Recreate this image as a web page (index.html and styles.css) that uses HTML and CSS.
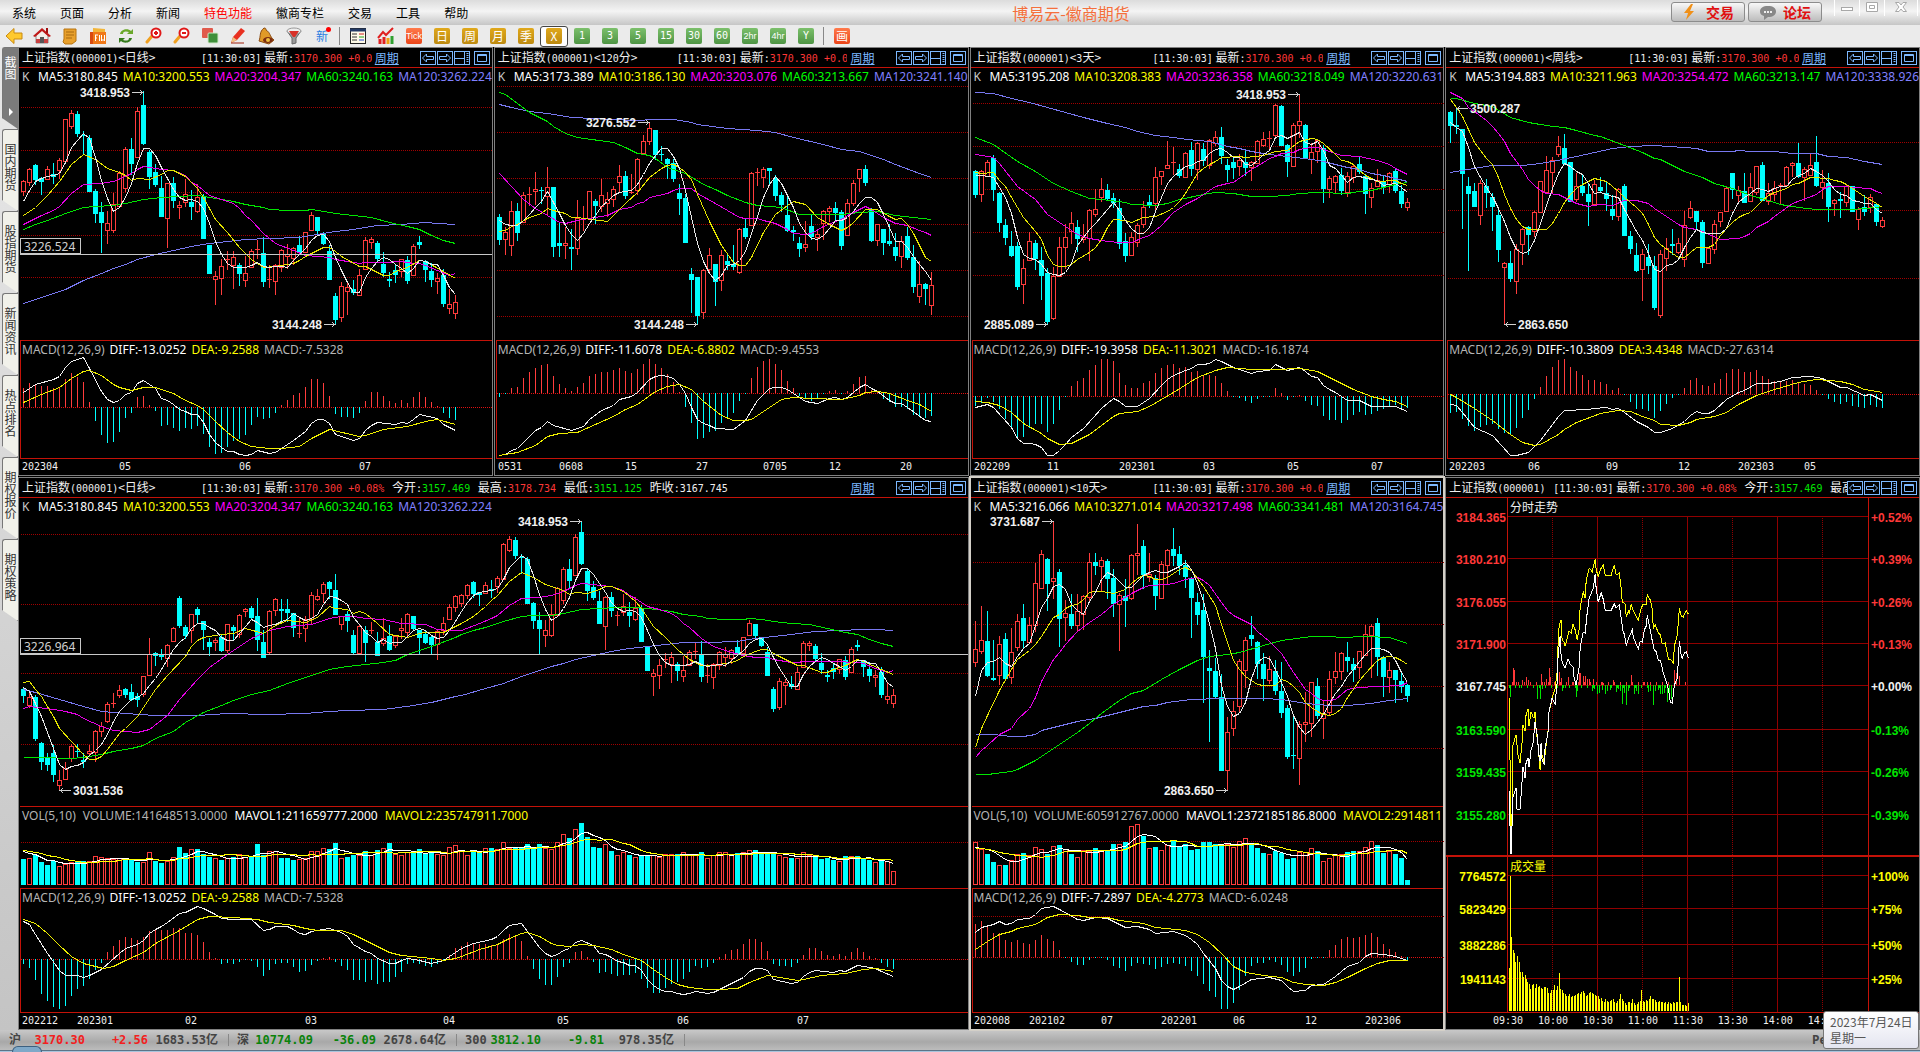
FILE: index.html
```html
<!DOCTYPE html>
<html lang="zh-CN">
<head>
<meta charset="utf-8">
<title>博易云-徽商期货</title>
<link rel="stylesheet" href="styles.css">
</head>
<body>
<svg class="defs" width="0" height="0" aria-hidden="true">
  <symbol id="i-prev" viewBox="0 0 16 14"><path d="M2.5 7 6.5 3v2.5h7v3h-7V11z" fill="none" stroke="#7cb8ff"/></symbol>
  <symbol id="i-next" viewBox="0 0 16 14"><path d="M13.5 7 9.500 3v2.5h-7v3h7V11z" fill="none" stroke="#7cb8ff"/></symbol>
  <symbol id="i-side" viewBox="0 0 16 14"><path d="M0 7.500h10M10.500 1v12" fill="none" stroke="#7cb8ff"/><path d="M13.500 2v10" stroke="#7cb8ff" stroke-width="2" stroke-dasharray="1 1"/></symbol>
  <symbol id="i-max" viewBox="0 0 16 14"><path d="M3.500 3.500h9v7h-9zM3 4.500h10" fill="none" stroke="#7cb8ff"/></symbol>
</svg>

<header class="menubar">
  <nav class="menu">
    <a href="#">系统</a><a href="#">页面</a><a href="#">分析</a><a href="#">新闻</a><a href="#" class="hot">特色功能</a><a href="#">徽商专栏</a><a href="#">交易</a><a href="#">工具</a><a href="#">帮助</a>
  </nav>
  <h1 class="app-title">博易云-徽商期货</h1>
  <div class="actions">
    <button class="pill"><svg width="14" height="16" viewBox="0 0 14 16"><path d="M9 0 2 9h4l-2 7 8-9H8l3-7z" fill="#f09018"/></svg>交易</button>
    <button class="pill"><svg width="18" height="16" viewBox="0 0 18 16"><path d="M9 2c5 0 8 2 8 5.500S14 13 9 13l-4 3v-4C2 11 1 9.500 1 7.500 1 4 4 2 9 2z" fill="#888"/><path d="M5 7h2v2H5zM8 7h2v2H8zM11 7h2v2h-2z" fill="#eee"/></svg>论坛</button>
    <div class="win">
      <button aria-label="最小化"><svg width="14" height="14"><rect x="1.500" y="7.500" width="11" height="3" fill="#fff" stroke="#a8a8a8"/></svg></button>
      <button aria-label="还原"><svg width="14" height="14"><path d="M1.500 2.500h11v9h-11zM4.500 5.500h5v3h-5z" fill="#fff" stroke="#a8a8a8"/></svg></button>
      <button aria-label="关闭"><svg width="14" height="14"><path d="M1.500 2.500h3.500l2 2.500 2-2.500h3.500L9 7l3.500 4.500H9L7 9l-2 2.500H1.500L5 7z" fill="#fff" stroke="#a8a8a8"/></svg></button>
    </div>
  </div>
</header>

<div class="toolbar" role="toolbar">
  <button aria-label="后退"><svg width="18" height="18"><path d="M1 9 9 1.500V6h8v6H9v4.500z" fill="#ffc92e" stroke="#c98a10"/></svg></button>
  <button aria-label="首页"><svg width="18" height="18"><path d="M3 8v8h12V8L9 3z" fill="#f3efe9" stroke="#888"/><path d="M0 9 9 1l9 8-2 1-7-6-7 6z" fill="#c01818"/><path d="M13 1h2v5h-2z" fill="#a01010"/><path d="M3 12h4v4H3zM11 12h4v4h-4z" fill="#c84040"/><path d="M7 10h4v6H7z" fill="#555"/></svg></button>
  <button aria-label="公告"><svg width="18" height="18"><path d="M3 2h12v12l-4 3H4l-2-2 1-3z" fill="#e8a02c" stroke="#b87510"/><path d="M5 5h8M5 8h8M5 11h6" stroke="#a86a10"/></svg></button>
  <button aria-label="期货"><svg width="18" height="18"><path d="M4 1l12 1v4H4z" fill="#f2b53a"/><path d="M1 5h16v12H1z" fill="#f07818"/><path d="M1 5h3v12H1z" fill="#d84a10"/><path d="M6 8h3M6.500 8v6M6 11h2M10.500 8v6M12.500 8v6M15.500 8v6M13 13h3" stroke="#fff" fill="none"/></svg></button>
  <button aria-label="刷新"><svg width="18" height="18"><path d="M3 7c1-5 8-6 11-3l2-2v5h-6l2-2C9 4 6 4 6 7z" fill="#6aa82a"/><path d="M15 11c-1 5-8 6-11 3l-2 2v-5h6l-2 2c3 1 6 1 6-2z" fill="#347a1c"/></svg></button>
  <button aria-label="放大"><svg width="18" height="18"><path d="M7 9 2 15" stroke="#f0a020" stroke-width="3" stroke-linecap="round"/><circle cx="11" cy="6" r="4.500" fill="#fff" stroke="#e01818" stroke-width="2"/><path d="M9 6h4M11 4v4" stroke="#e01818" stroke-width="2"/></svg></button>
  <button aria-label="缩小"><svg width="18" height="18"><path d="M7 9 2 15" stroke="#f0a020" stroke-width="3" stroke-linecap="round"/><circle cx="11" cy="6" r="4.500" fill="#fff" stroke="#e01818" stroke-width="2"/><path d="M9 6h4" stroke="#e01818" stroke-width="2"/></svg></button>
  <button aria-label="叠加"><svg width="18" height="18"><rect x="1" y="1" width="11" height="10" rx="1" fill="#e05a4c"/><rect x="7" y="6" width="10" height="10" rx="1" fill="#3f8f3a" stroke="#cfe8c8"/></svg></button>
  <button aria-label="画线"><svg width="18" height="18"><path d="M2 16 4 10 12 1l4 3-8 9z" fill="#e83020"/><path d="M2 16l2-6 4 3z" fill="#f0c080"/><path d="M2 16h13" stroke="#a0200c"/></svg></button>
  <button aria-label="预警"><svg width="18" height="18"><path d="M7 1c2 0 2 1 2 2 5 3 3 6 8 10l-5 4-10-3c2-5 0-9 5-13z" fill="#e09a28" stroke="#8a4a10"/><ellipse cx="11" cy="13" rx="5" ry="3" fill="#7a2c10"/><circle cx="11" cy="13" r="2" fill="#f0c040"/></svg></button>
  <button aria-label="筛选"><svg width="18" height="18"><path d="M2 4l5 7v6l4-1v-5l5-7z" fill="#9a9a9a" stroke="#666"/><ellipse cx="9" cy="4" rx="7" ry="3" fill="#eee" stroke="#999"/><path d="M4 4h10l-4 6H8z" fill="#d83028"/></svg></button>
  <button class="new">新<span class="dot"></span></button>
  <i class="sep"></i>
  <button aria-label="报价"><svg width="18" height="18"><rect x="1.500" y="1.500" width="15" height="15" fill="#fffbe8" stroke="#222"/><path d="M1 3h16" stroke="#223a66" stroke-width="3"/><path d="M3 7h5M3 10h5M3 13h5" stroke="#333"/><path d="M10 7h5" stroke="#d02020"/><path d="M10 10h5" stroke="#20a020"/><path d="M10 13h5" stroke="#2040d0"/></svg></button>
  <button aria-label="走势"><svg width="18" height="18"><path d="M3 12v5M7 10v7" stroke="#e02020" stroke-width="3"/><path d="M11 11v6" stroke="#f0a010" stroke-width="3"/><path d="M15 9v8" stroke="#30a030" stroke-width="3"/><path d="M1 11l5-6 3 3 7-7" stroke="#e02020" stroke-width="2" fill="none"/></svg></button>
  <button><b class="tile red small">Tick</b></button>
  <button><b class="tile gold">日</b></button>
  <button><b class="tile gold">周</b></button>
  <button><b class="tile gold">月</b></button>
  <button><b class="tile gold">季</b></button>
  <button class="on"><b class="tile gold">X</b></button>
  <button><b class="tile green">1</b></button>
  <button><b class="tile green">3</b></button>
  <button><b class="tile green">5</b></button>
  <button><b class="tile green">15</b></button>
  <button><b class="tile green">30</b></button>
  <button><b class="tile green">60</b></button>
  <button><b class="tile green small">2hr</b></button>
  <button><b class="tile green small">4hr</b></button>
  <button><b class="tile green">Y</b></button>
  <i class="sep"></i>
  <button><b class="tile red">画</b></button>
</div>

<main class="desk">
  <nav class="tabs">
    <a href="#" class="tab current"><span>截图</span><i class="tri"></i></a>
    <a href="#" class="tab"><span>国内期货</span></a>
    <a href="#" class="tab"><span>股指期货</span></a>
    <a href="#" class="tab"><span>新闻资讯</span></a>
    <a href="#" class="tab"><span>热点排名</span></a>
    <a href="#" class="tab"><span>期权报价</span></a>
    <a href="#" class="tab"><span>期权策略</span></a>
  </nav>

  <div class="panels">
    <section class="panel">
      <header class="bar"><h2>上证指数<tt>(000001)</tt>&lt;日线&gt;</h2><p class="quote"><tt>[11:30:03]</tt> 最新<tt>:</tt><tt class="up">3170.300 +0.08%</tt></p><a href="#" class="cycle">周期</a><div class="nav" data-nav></div></header>
      <div class="pane main"><p class="legend"><span class="k">K</span><span class="w">MA5:3180.845</span><span class="y">MA10:3200.553</span><span class="m">MA20:3204.347</span><span class="g">MA60:3240.163</span><span class="b">MA120:3262.224</span></p><svg class="plot" data-chart="day" data-part="price"></svg></div>
      <div class="pane macd"><p class="legend"><span class="n">MACD(12,26,9)</span><span class="w">DIFF:-13.0252</span><span class="y">DEA:-9.2588</span><span class="n">MACD:-7.5328</span></p><svg class="plot" data-chart="day" data-part="macd"></svg></div>
      <svg class="axis" data-chart="day" data-part="axis"></svg>
    </section>
    <section class="panel">
      <header class="bar"><h2>上证指数<tt>(000001)</tt>&lt;<tt>120</tt>分&gt;</h2><p class="quote"><tt>[11:30:03]</tt> 最新<tt>:</tt><tt class="up">3170.300 +0.08%</tt></p><a href="#" class="cycle">周期</a><div class="nav" data-nav></div></header>
      <div class="pane main"><p class="legend"><span class="k">K</span><span class="w">MA5:3173.389</span><span class="y">MA10:3186.130</span><span class="m">MA20:3203.076</span><span class="g">MA60:3213.667</span><span class="b">MA120:3241.140</span></p><svg class="plot" data-chart="m120" data-part="price"></svg></div>
      <div class="pane macd"><p class="legend"><span class="n">MACD(12,26,9)</span><span class="w">DIFF:-11.6078</span><span class="y">DEA:-6.8802</span><span class="n">MACD:-9.4553</span></p><svg class="plot" data-chart="m120" data-part="macd"></svg></div>
      <svg class="axis" data-chart="m120" data-part="axis"></svg>
    </section>
    <section class="panel">
      <header class="bar"><h2>上证指数<tt>(000001)</tt>&lt;<tt>3</tt>天&gt;</h2><p class="quote"><tt>[11:30:03]</tt> 最新<tt>:</tt><tt class="up">3170.300 +0.08%</tt></p><a href="#" class="cycle">周期</a><div class="nav" data-nav></div></header>
      <div class="pane main"><p class="legend"><span class="k">K</span><span class="w">MA5:3195.208</span><span class="y">MA10:3208.383</span><span class="m">MA20:3236.358</span><span class="g">MA60:3218.049</span><span class="b">MA120:3220.631</span></p><svg class="plot" data-chart="d3" data-part="price"></svg></div>
      <div class="pane macd"><p class="legend"><span class="n">MACD(12,26,9)</span><span class="w">DIFF:-19.3958</span><span class="y">DEA:-11.3021</span><span class="n">MACD:-16.1874</span></p><svg class="plot" data-chart="d3" data-part="macd"></svg></div>
      <svg class="axis" data-chart="d3" data-part="axis"></svg>
    </section>
    <section class="panel">
      <header class="bar"><h2>上证指数<tt>(000001)</tt>&lt;周线&gt;</h2><p class="quote"><tt>[11:30:03]</tt> 最新<tt>:</tt><tt class="up">3170.300 +0.08%</tt></p><a href="#" class="cycle">周期</a><div class="nav" data-nav></div></header>
      <div class="pane main"><p class="legend"><span class="k">K</span><span class="w">MA5:3194.883</span><span class="y">MA10:3211.963</span><span class="m">MA20:3254.472</span><span class="g">MA60:3213.147</span><span class="b">MA120:3338.926</span></p><svg class="plot" data-chart="week" data-part="price"></svg></div>
      <div class="pane macd"><p class="legend"><span class="n">MACD(12,26,9)</span><span class="w">DIFF:-10.3809</span><span class="y">DEA:3.4348</span><span class="n">MACD:-27.6314</span></p><svg class="plot" data-chart="week" data-part="macd"></svg></div>
      <svg class="axis" data-chart="week" data-part="axis"></svg>
    </section>
    <section class="panel wide">
      <header class="bar"><h2>上证指数<tt>(000001)</tt>&lt;日线&gt;</h2><p class="quote"><tt>[11:30:03]</tt> 最新<tt>:</tt><tt class="up">3170.300 +0.08%</tt> 今开<tt>:</tt><tt class="down">3157.469</tt> 最高<tt>:</tt><tt class="up">3178.734</tt> 最低<tt>:</tt><tt class="down">3151.125</tt> 昨收<tt>:3167.745</tt></p><a href="#" class="cycle">周期</a><div class="nav" data-nav></div></header>
      <div class="pane main"><p class="legend"><span class="k">K</span><span class="w">MA5:3180.845</span><span class="y">MA10:3200.553</span><span class="m">MA20:3204.347</span><span class="g">MA60:3240.163</span><span class="b">MA120:3262.224</span></p><svg class="plot" data-chart="dayLong" data-part="price"></svg></div>
      <div class="pane vol"><p class="legend"><span class="n">VOL(5,10)</span><span class="n">VOLUME:141648513.0000</span><span class="w">MAVOL1:211659777.2000</span><span class="y">MAVOL2:235747911.7000</span></p><svg class="plot" data-chart="dayLong" data-part="vol"></svg></div>
      <div class="pane macd tall"><p class="legend"><span class="n">MACD(12,26,9)</span><span class="w">DIFF:-13.0252</span><span class="y">DEA:-9.2588</span><span class="n">MACD:-7.5328</span></p><svg class="plot" data-chart="dayLong" data-part="macd"></svg></div>
      <svg class="axis" data-chart="dayLong" data-part="axis"></svg>
    </section>
    <section class="panel active">
      <header class="bar"><h2>上证指数<tt>(000001)</tt>&lt;<tt>10</tt>天&gt;</h2><p class="quote"><tt>[11:30:03]</tt> 最新<tt>:</tt><tt class="up">3170.300 +0.08%</tt></p><a href="#" class="cycle">周期</a><div class="nav" data-nav></div></header>
      <div class="pane main"><p class="legend"><span class="k">K</span><span class="w">MA5:3216.066</span><span class="y">MA10:3271.014</span><span class="m">MA20:3217.498</span><span class="g">MA60:3341.481</span><span class="b">MA120:3164.745</span></p><svg class="plot" data-chart="d10" data-part="price"></svg></div>
      <div class="pane vol"><p class="legend"><span class="n">VOL(5,10)</span><span class="n">VOLUME:605912767.0000</span><span class="w">MAVOL1:2372185186.8000</span><span class="y">MAVOL2:2914811</span></p><svg class="plot" data-chart="d10" data-part="vol"></svg></div>
      <div class="pane macd tall"><p class="legend"><span class="n">MACD(12,26,9)</span><span class="w">DIFF:-7.2897</span><span class="y">DEA:-4.2773</span><span class="n">MACD:-6.0248</span></p><svg class="plot" data-chart="d10" data-part="macd"></svg></div>
      <svg class="axis" data-chart="d10" data-part="axis"></svg>
    </section>
    <section class="panel">
      <header class="bar compact"><h2>上证指数<tt>(000001)</tt></h2><p class="quote"><tt>[11:30:03]</tt> 最新<tt>:</tt><tt class="up">3170.300 +0.08%</tt> 今开<tt>:</tt><tt class="down">3157.469</tt> 最高<tt>:</tt><tt class="up">3178.734</tt></p><div class="nav" data-nav></div></header>
      <div class="tick">
        <svg class="tick-left" id="tick-left"></svg>
        <svg class="tick-plot" id="tick-plot"></svg>
        <svg class="tick-right" id="tick-right"></svg>
      </div>
    </section>
  </div>
</main>

<footer class="status">
  <span class="name">沪</span><span class="price up">3170.30</span><span class="diff up">+2.56</span><span class="sum">1683.53亿</span><i></i>
  <span class="name">深</span><span class="price down">10774.09</span><span class="diff down">-36.09</span><span class="sum">2678.64亿</span><i></i>
  <span class="name">300</span><span class="price down">3812.10</span><span class="diff down">-9.81</span><span class="sum">978.35亿</span><i></i>
  <span class="pe">Pe</span>
</footer>
<div class="taskbar"><span class="orb"></span></div>
<div class="tip">2023年7月24日<br>星期一</div>
<script src="chart.js"></script>
</body>
</html>
```

FILE: styles.css
```css
* { box-sizing: border-box; }
html { background: #000; }
body {
  margin: 0;
  min-height: 100vh;
  display: flex;
  flex-direction: column;
  position: relative;
  font: 12px/16px "Noto Sans CJK SC", sans-serif;
  color: #000;
  overflow-x: hidden;
}
h1, h2, p { margin: 0; font-size: 12px; font-weight: 400; }
a { color: inherit; text-decoration: none; }
button { margin: 0; padding: 0; border: 0; background: none; font: inherit; color: inherit; }
svg { display: block; }
tt { font: 10px/16px "DejaVu Sans Mono", monospace; }
.defs { position: absolute; }

/* menu bar */
.menubar {
  height: 25px;
  display: grid;
  grid-template-columns: 1fr auto 1fr;
  align-items: center;
  background: linear-gradient(#dcdcdc, #f4f4f4 45%, #c6c6c6);
}
.menu { display: flex; gap: 24px; padding-left: 12px; }
.menu .hot { color: #f00; }
.app-title { font-size: 16px; line-height: 24px; color: #f5703c; padding-left: 222px; }
.actions { display: flex; justify-content: flex-end; gap: 3px; height: 25px; padding-top: 2px; }
.pill {
  width: 74px;
  height: 20px;
  display: flex;
  align-items: center;
  justify-content: center;
  gap: 10px;
  border: 1px solid #8c8c8c;
  border-radius: 3px;
  background: linear-gradient(#f8f8f8, #bcbcbc);
  color: #e01010;
  font-size: 14px;
  font-weight: 700;
}
.pill + .pill { gap: 6px; }
.win { display: flex; margin: -2px 2px 0 9px; height: 16px; }
.win button { width: 25px; border-left: 1px solid #fff; display: flex; justify-content: center; }
.win button:last-child { width: 34px; border-right: 1px solid #fff; justify-content: center; }

/* toolbar */
.toolbar { height: 22px; display: flex; align-items: center; background: #ebebeb; }
.toolbar button { width: 28px; height: 21px; display: flex; align-items: center; justify-content: center; position: relative; }
.toolbar .on { border: 1px solid #444; border-radius: 3px; background: #fff; }
.sep { width: 1px; height: 18px; margin: 0 4px 0 3px; background: #888; }
.new { color: #2a7de1; font-size: 12px; }
.dot { position: absolute; right: 5px; top: 1px; width: 5px; height: 5px; border-radius: 50%; background: #f00; }
.tile {
  width: 16px;
  height: 16px;
  display: flex;
  justify-content: center;
  border-radius: 2px;
  color: #fff;
  font: 12px/16px "Noto Sans CJK SC", sans-serif;
  white-space: nowrap;
}
.gold { background: linear-gradient(#e0a81c, #bd8a10); }
.green { background: linear-gradient(#7cc06c, #4e9444); font: 10px/16px "DejaVu Sans Mono", monospace; }
.red { background: linear-gradient(#ff7a4c, #ea4418); }
.tile.small { font: 9px/16px "Liberation Sans", sans-serif; }

/* side tabs and panel grid */
.desk { flex: 1; display: flex; }
.tabs { width: 18px; padding-left: 2px; background: linear-gradient(#e8e8e8, #c4c4c4); }
.tab {
  height: 82px;
  display: flex;
  flex-direction: column;
  align-items: center;
  justify-content: center;
  padding-bottom: 6px;
  background: #f1f1ea;
  border: 1px solid #777;
  border-right: 0;
  border-radius: 3px 0 0 0;
  clip-path: polygon(0 0, 100% 0, 100% 100%, 0 71px);
  color: #333;
}
.tab span { width: 12px; line-height: 12px; word-break: break-all; }
.tab.current { background: #7b7b7b; color: #fff; justify-content: space-between; padding: 8px 0 12px; }
.tri { border: 4px solid transparent; border-left-color: #fff; border-right: 0; }
.panels {
  flex: 1;
  min-width: 0;
  display: grid;
  grid-template-columns: repeat(4, minmax(0, 1fr));
  grid-template-rows: minmax(429px, 429fr) minmax(553px, 553fr);
  gap: 1px;
  background: #000;
}
.panel {
  min-width: 0;
  display: flex;
  flex-direction: column;
  border: 1px solid #808080;
  background: #000;
  color: #f0f0f0;
}
.panel.wide { grid-column: span 2; }
.panel.active { border-color: #d4d0c8; outline: 1px solid #d4d0c8; z-index: 1; }
.bar {
  height: 20px;
  display: flex;
  align-items: center;
  padding: 0 2px 0 3px;
  border-bottom: 1px solid #c41208;
  white-space: pre;
}
.bar h2 { flex: 0 0 179px; }
.bar.compact h2 { flex-basis: 104px; }
.quote { flex: 1; min-width: 0; overflow: hidden; }
.quote .up, .quote .down { margin-right: 5px; }
.quote .up { color: #ff3838; }
.quote .down { color: #00e600; }
.cycle { margin: 0 21px 0 3px; color: #7cb8ff; text-decoration: underline; }
.nav { display: flex; gap: 1px; }
.nav button { width: 16px; height: 14px; border: 1px solid #7cb8ff; overflow: hidden; }
.nav button svg { margin: -1px; }
.nav button:last-child { margin-left: 3px; }

/* chart panes */
.pane { display: flex; flex-direction: column; border-bottom: 1px solid #c41208; margin-left: 1px; }
.pane.main { flex: 1; }
.pane.vol { flex: 0 0 82px; }
.pane.macd { flex: 0 0 118px; border-left: 1px solid #c41208; }
.pane.macd.tall { flex-basis: 124px; }
.pane.macd .legend { padding-left: 1px; }
.pane.macd .plot { margin-left: -2px; width: calc(100% + 2px); }
.legend { display: flex; gap: 5px; height: 18px; padding-left: 2px; overflow: hidden; white-space: nowrap; font: 12px/18px "Noto Sans", sans-serif; }
.pane.vol .legend { gap: 7px; }
.legend .k { width: 11px; color: #c8c8c8; }
.w { color: #fff; }
.y { color: #ff0; }
.m { color: #f0f; }
.g { color: #0f0; }
.b { color: #8080ff; }
.n { color: #b4b4b4; }
.plot { flex: 1 1 0; height: 0; width: calc(100% + 1px); margin-left: -1px; min-height: 0; overflow: visible; shape-rendering: crispEdges; }
.plot text { font: 700 12px "Liberation Sans", sans-serif; fill: #f0f0f0; }
.plot text.cross { font: 12px "Noto Sans", sans-serif; fill: #d0d0d0; }
.axis { height: 16px; width: 100%; }
.axis text, .tick-plot text { font: 10px "DejaVu Sans Mono", monospace; fill: #f0f0f0; }
.tick { flex: 1; display: flex; }
.tick > svg { height: 100%; overflow: visible; shape-rendering: crispEdges; }
.tick-left { flex: 0 0 62px; width: 62px; }
.tick-plot { flex: 1; width: 100%; min-width: 0; }
.tick-right { flex: 0 0 51px; width: 51px; }
.tick-left text, .tick-right text { font: 700 12px "Liberation Sans", sans-serif; }
.tick-plot text.cap { font: 12px "Noto Sans CJK SC", sans-serif; }

/* status bar */
.status {
  height: 20px;
  display: flex;
  align-items: center;
  padding-left: 9px;
  background: linear-gradient(#c8c8c8, #a8a8a8 60%, #bcbcbc);
  font: 700 12px/16px "DejaVu Sans Mono", "Noto Sans CJK SC", monospace;
  color: #444;
  white-space: nowrap;
}
.status .up { color: #f22020; }
.status .down { color: #0a820a; }
.status .name { width: 18px; }
.status .price { width: 58px; text-align: right; }
.status .diff { width: 63px; text-align: right; }
.status .sum { width: 70px; text-align: right; }
.status i { width: 1px; height: 12px; margin: 0 8px 0 10px; background: #888; }
.pe { margin-left: auto; width: 108px; font-family: "Noto Sans", sans-serif; }
.taskbar { height: 2px; background: #a9c4dc; border-top: 1px solid #5c7488; position: relative; }
.orb { position: absolute; left: 12px; bottom: 0; width: 30px; height: 6px; border-radius: 15px 15px 0 0; background: #7fa8c8; border: 1px solid #3c6080; border-bottom: 0; }
.tip {
  position: absolute;
  right: 1px;
  bottom: 3px;
  z-index: 2;
  width: 96px;
  height: 38px;
  padding: 2px 6px;
  border: 1px solid #767676;
  border-radius: 3px;
  background: linear-gradient(#fff, #e4e5f0);
  color: #575757;
  white-space: nowrap;
}
```

FILE: chart.js
```js
// Candles: colour letter, then high, body top, body bottom, low, measured down from the panel top.
const DAY = `r420 424 452 467;r385 388 425 438;c372 376 420 434;c412 414 426 464;r378 388 416 418;c368 402 411 433;r354 360 390 416;r236 238 364 366;r210 220 258 266;c213 222 281 292;c274 284 288 345;c286 294 455 456;c448 454 521 548;c486 516 549 638;r514 550 571 612;r458 492 569 578;r394 398 499 500;r322 328 443 456;c294 327 371 404;r202 213 352 354;c154 195 311 314;c330 337 410 446;c372 396 435 440;c408 444 530 530;r428 430 535 624;c412 430 482 504;r484 496 502 536;r418 463 487 500;c450 486 500 540;r432 470 512 518;c462 470 597 597;c615 615 701 701;r694 709 718 794;r657 679 714 766;r634 657 660 690;r633 650 675 746;c669 675 701 738;r648 699 721 741;r626 633 680 684;r600 628 631 656;c592 640 725 741;r676 717 720 744;r672 675 723 766;r628 631 680 697;r612 641 649 686;r621 625 653 675;c588 616 638 644;r576 577 635 636;r515 526 569 570;c531 531 573 586;c576 578 611 616;c616 633 719 719;c759 768 839 853;r727 738 832 845;r729 740 754 824;c720 748 759 766;r688 706 766 769;r591 601 688 690;r591 598 606 627;c603 609 656 664;c637 672 699 712;c697 717 722 741;c676 690 704 729;r656 658 693 712;c648 660 722 733;r612 619 706 707;c588 606 616 627;c660 663 689 725;c670 692 719 741;r700 715 724 762;c687 705 791 801;r746 793 805 822;r766 787 820 838`;
const DAY_MA = [
  '70,482 88,450 106,424 124,413 142,409 160,406 178,400 196,365 214,322 232,300 250,279 268,293 286,350 304,420 322,475 340,514 358,502 376,470 394,430 412,370 430,325 448,325 466,345 484,380 502,415 520,448 538,472 556,481 574,477 592,482 610,503 628,550 646,602 664,642 682,668 700,680 718,680 736,680 754,675 772,666 790,677 808,682 826,679 844,677 862,680 880,660 898,642 916,624 934,600 952,586 970,583 988,602 1006,652 1024,690 1042,725 1060,757 1078,757 1096,712 1114,684 1132,664 1150,652 1168,656 1186,671 1204,685 1222,699 1240,684 1258,661 1276,662 1294,671 1312,671 1330,706 1348,741 1366,761',
  '70,524 106,500 124,484 142,464 160,443 178,424 214,371 250,341 286,358 322,384 358,397 376,405 394,421 412,414 448,417 484,401 502,391 520,391 556,408 592,444 610,470 646,536 682,576 718,620 754,656 790,680 826,679 880,670 898,661 916,647 952,630 970,622 988,622 1006,634 1024,647 1078,679 1096,679 1150,706 1168,706 1186,692 1222,681 1258,659 1276,664 1330,694 1366,713',
  '70,551 124,526 160,510 178,497 214,460 250,433 304,430 340,422 376,408 394,400 412,388 430,379 466,383 484,388 520,391 556,406 574,426 592,436 610,450 628,464 664,476 700,490 718,503 736,524 754,540 790,580 826,608 880,631 916,644 952,649 988,651 1006,657 1060,667 1078,669 1096,665 1150,665 1204,664 1240,669 1258,668 1276,674 1312,691 1348,704 1366,700',
  '70,568 106,553 142,540 196,520 250,500 286,499 340,496 376,490 430,476 484,472 538,469 592,466 628,471 700,482 736,493 790,502 808,507 862,511 916,511 934,508 970,512 1006,520 1060,526 1114,530 1168,546 1222,559 1258,568 1294,584 1330,601 1366,610',
  '70,788 142,765 196,746 250,721 304,700 340,685 376,673 412,657 466,643 520,629 574,618 628,609 682,603 736,597 808,595 898,592 952,582 1006,574 1060,568 1132,556 1204,552 1276,547 1312,549 1366,553'
];
const DAY_BARS = '1045 1030 1033 1038 1038 1044 1043 1018 999 1010 1026 1086 1142 1185 1209 1206 1175 1134 1118 1071 1068 1095 1114 1158 1154 1163 1172 1165 1167 1158 1182 1221 1242 1239 1221 1203 1196 1185 1154 1131 1137 1134 1118 1095 1080 1065 1060 1041 1017 1017 1028 1068 1122 1131 1130 1134 1118 1083 1056 1056 1068 1083 1089 1080 1089 1071 1056 1071 1086 1098 1118 1134 1140';
const DAY_DIFF = '70,1055 106,1033 160,1018 178,1008 196,980 214,962 250,952 268,985 304,1053 322,1077 340,1087 358,1079 376,1063 394,1056 412,1028 430,1021 466,1044 484,1075 502,1080 520,1093 538,1108 556,1112 574,1123 592,1123 610,1145 628,1183 646,1206 664,1222 682,1232 700,1234 718,1243 736,1246 754,1242 772,1231 808,1240 826,1235 880,1199 916,1174 934,1150 952,1138 970,1136 988,1148 1006,1183 1060,1200 1078,1195 1096,1171 1114,1154 1132,1147 1186,1153 1204,1146 1222,1150 1240,1136 1258,1123 1312,1135 1330,1151 1366,1171';
const DAY_DEA = '70,1086 124,1061 178,1040 214,1014 250,994 268,991 304,1006 340,1033 358,1042 394,1049 430,1040 466,1042 520,1060 556,1080 592,1096 610,1107 646,1142 682,1176 718,1203 754,1217 808,1225 844,1225 898,1218 934,1193 988,1168 1078,1187 1096,1184 1150,1166 1222,1158 1276,1143 1312,1138 1366,1151';

// Continue a long series with the recent one, shifted and rescaled to the long chart's range.
const shiftPoints = (s, from, to, k) => s.split(' ').map(p => { const [x, y] = p.split(',').map(Number); return `${x + 1314},${Math.round(to + (y - from) * k)}`; }).join(' ');
const shiftMa = i => ' ' + shiftPoints(DAY_MA[i], 154, 138, 0.737);
const shiftCandles = DAY.split(';').map(c => c[0] + c.slice(1).split(' ').map(v => Math.round(138 + (v - 154) * 0.737)).join(' ')).join(';');

const CHARTS = {
  day: {
    x0: 70, unit: 3, tops: { price: 138, macd: 957 }, origin: 57,
    candles: DAY, ma: DAY_MA, grid: [202, 331, 457, 586, 712], cross: [643, '3226.524'],
    marks: [['3418.953', 430, 155, 1], ['3144.248', 1006, 853, 1]],
    zero: 1102, bars: DAY_BARS, diff: DAY_DIFF, dea: DAY_DEA,
    axis: [[65, '202304'], [357, '05'], [716, '06'], [1076, '07']]
  },
  m120: {
    x0: 28, unit: 3, tops: { price: 138, macd: 957 }, origin: 15,
    candles: `c522 532 600 614;r561 577 596 645;r484 514 616 648;c488 514 578 602;r457 466 547 549;r441 461 464 498;r396 448 454 494;c441 450 453 492;r381 442 469 524;c441 441 620 651;c549 609 617 651;r562 610 616 657;c568 621 627 690;r480 535 623 644;r498 537 540 573;r453 454 534 536;c477 483 497 552;r417 466 498 516;r455 476 490 530;r438 446 476 501;r376 409 425 456;c392 408 467 478;r402 455 460 462;r354 356 451 464;r285 302 340 343;r248 263 302 315;c270 270 345 360;c318 341 345 364;c354 357 372 418;c358 370 417 427;c432 459 477 525;c462 475 609 609;c684 702 720 818;c711 711 828 853;r687 690 815 836;r624 646 688 700;c672 672 726 797;r630 646 721 752;c640 662 675 690;c614 672 682 690;r564 566 695 702;c537 564 591 597;r396 400 556 558;r384 397 400 438;r382 388 410 444;c384 384 392 434;c406 414 467 483;c456 465 495 515;c466 524 573 576;c558 570 575 603;c591 610 627 651;r542 613 622 636;c526 558 591 600;r570 583 590 633;r510 512 548 600;r498 503 512 546;c486 504 520 546;c510 516 618 630;r477 490 586 588;r420 430 490 498;r387 388 413 456;c375 388 429 438;c504 508 603 606;r552 553 599 618;c566 568 609 645;c552 602 611 618;c579 620 648 663;r588 604 647 684;c560 588 654 660;c615 651 741 759;r663 733 767 789;c729 732 747 795;r696 736 794 825`,
    ma: [
      '28,541 46,552 64,556 82,556 100,540 118,522 136,500 154,482 172,454 190,486 208,520 226,556 244,582 262,600 280,580 298,550 316,524 334,498 352,484 370,464 388,456 406,452 424,450 442,432 460,402 478,370 496,345 514,323 532,325 550,348 568,385 586,450 604,530 622,610 640,662 658,700 676,720 694,706 712,676 730,672 748,660 766,632 784,580 802,528 820,470 838,432 856,408 874,430 892,465 910,502 928,548 946,575 964,595 982,598 1000,585 1018,565 1036,540 1054,540 1072,532 1090,512 1108,490 1126,472 1144,470 1162,485 1180,522 1198,562 1216,604 1234,603 1252,622 1270,648 1288,671 1306,693 1324,720',
      '28,572 46,571 64,557 82,553 100,540 118,530 154,518 172,504 190,511 226,520 244,532 262,530 280,534 352,543 370,524 406,490 442,455 478,411 514,385 532,375 550,373 568,380 586,396 604,416 622,462 658,544 694,615 730,667 748,676 766,676 784,650 820,575 856,522 892,495 910,484 946,493 982,531 1018,553 1054,570 1072,562 1090,545 1126,508 1162,506 1198,527 1216,538 1234,535 1252,551 1270,580 1306,650 1324,662',
      '28,398 64,438 100,477 136,503 172,526 208,546 226,548 262,541 352,524 388,508 424,502 442,490 460,485 478,472 532,460 550,449 568,443 604,445 622,459 676,490 712,510 748,532 766,535 802,533 820,540 856,550 892,568 910,578 946,583 964,579 1000,557 1036,544 1054,538 1072,526 1108,506 1126,499 1144,506 1180,530 1216,549 1252,556 1288,571 1306,577 1324,586',
      '28,155 46,162 82,190 118,217 172,244 190,259 226,279 262,290 370,307 406,320 442,338 478,346 496,354 532,380 586,400 640,432 676,446 712,465 766,486 802,494 874,502 928,523 1000,523 1054,521 1108,516 1162,514 1216,525 1270,530 1324,536',
      '28,193 64,202 118,212 172,220 244,232 310,234 430,240 500,238 550,238 604,245 622,253 712,264 802,270 856,276 910,292 1000,313 1054,326 1108,334 1180,356 1216,373 1288,399 1324,410'],
    grid: [139, 277, 415, 553, 691, 829],
    marks: [['3276.552', 478, 247, 1], ['3144.248', 622, 853, 1]],
    zero: 1060,
    bars: '1071 1062 1044 1041 1014 995 983 975 971 1008 1032 1044 1053 1041 1028 1008 1002 996 995 990 983 993 998 987 971 957 971 983 1002 1026 1056 1101 1149 1197 1194 1176 1174 1149 1134 1119 1083 1062 1014 980 963 957 971 990 1022 1044 1068 1078 1083 1077 1062 1053 1049 1062 1053 1032 1011 1008 1050 1053 1077 1086 1101 1100 1107 1125 1130 1134 1128',
    diff: '28,1246 46,1242 64,1231 82,1225 136,1171 154,1161 172,1144 190,1156 244,1170 280,1158 298,1136 334,1110 370,1094 388,1078 424,1069 442,1056 478,1018 496,1009 514,1006 532,1008 550,1015 568,1033 586,1060 604,1100 622,1136 640,1150 658,1154 676,1165 730,1167 766,1140 802,1081 838,1045 856,1042 874,1042 892,1048 910,1060 946,1083 982,1090 1018,1073 1036,1070 1054,1078 1072,1070 1108,1041 1126,1032 1144,1044 1162,1053 1198,1080 1216,1089 1234,1090 1252,1101 1306,1141 1324,1144',
    dea: '28,1244 82,1237 136,1214 172,1189 208,1179 262,1175 316,1153 370,1129 406,1107 442,1093 496,1054 532,1038 568,1033 604,1048 640,1083 694,1126 730,1139 766,1141 784,1136 838,1100 874,1077 910,1070 964,1075 1054,1077 1108,1066 1126,1056 1162,1053 1198,1060 1252,1080 1288,1093 1324,1112',
    axis: [[23, '0531'], [206, '0608'], [405, '15'], [619, '27'], [818, '0705'], [1017, '12'], [1231, '20']]
  },
  d3: {
    x0: 28, unit: 3, tops: { price: 138, macd: 957 }, origin: 15,
    candles: `c390 394 466 474;r391 392 461 485;r360 366 408 412;c346 353 449 482;c455 459 548 575;c537 556 594 614;c574 618 647 651;c606 618 740 750;r658 685 733 791;r577 602 661 664;c600 609 656 690;c621 660 707 780;c684 699 846 853;r681 709 835 840;r591 622 709 711;r552 592 622 688;r516 550 574 612;c540 561 596 636;r552 590 598 609;r508 511 595 662;r446 506 523 530;r414 448 472 486;c432 450 477 480;c460 474 490 503;c477 504 611 627;c580 603 648 665;r576 592 644 645;r548 556 607 622;r484 502 553 564;c465 486 497 503;r381 412 490 520;r392 394 408 434;r303 376 385 387;r321 365 368 404;c372 387 408 414;r336 338 412 414;c306 330 386 408;r306 310 388 420;c310 327 363 378;r298 301 374 388;r273 290 308 318;c261 291 349 372;c357 375 389 427;c348 366 384 416;r342 361 379 408;c333 366 384 408;r363 366 382 423;r300 302 370 371;r276 298 314 322;r273 294 297 330;r192 195 284 292;c195 198 318 318;c312 315 365 411;r249 254 377 381;r164 244 254 294;c252 255 355 356;r310 337 358 402;r298 300 334 370;c316 325 447 489;r408 415 448 474;r405 408 427 462;c384 405 453 466;r396 408 455 470;r375 378 410 430;c348 372 396 402;c402 408 461 521;r430 445 470 503;r387 420 437 438;c408 422 443 462;r396 400 432 459;c385 394 452 460;c435 453 491 503;r474 487 502 512`,
    ma: [
      '28,404 46,406 82,411 100,440 118,470 136,520 154,590 172,643 190,653 208,658 226,672 244,697 262,702 280,706 298,695 316,668 334,615 352,592 370,568 388,548 406,528 424,508 442,487 460,510 478,540 496,565 514,578 532,580 550,560 568,512 586,470 604,430 622,408 640,392 658,378 676,374 694,362 712,360 730,340 748,326 766,323 784,335 802,350 820,352 838,372 856,376 874,360 892,342 910,330 928,292 946,285 964,295 982,286 1000,275 1018,305 1036,311 1054,302 1072,330 1090,375 1108,384 1126,405 1144,427 1162,412 1180,409 1216,418 1234,421 1252,434 1288,430 1306,440 1324,455',
      '28,397 46,400 82,396 100,420 118,437 136,470 172,532 208,572 226,597 244,645 262,672 280,679 298,679 316,671 334,656 370,636 388,622 406,598 424,562 442,538 478,540 496,546 532,532 568,527 604,513 622,500 640,482 658,458 676,430 694,398 712,385 730,373 748,363 766,352 820,348 838,352 892,345 928,332 964,329 1000,302 1036,295 1054,297 1072,308 1108,343 1126,360 1144,363 1162,372 1180,390 1198,405 1234,422 1288,421 1306,430 1324,436',
      '28,343 64,348 82,352 100,370 154,437 208,477 244,522 280,545 334,583 370,594 424,604 460,606 496,607 532,590 550,586 586,556 622,517 658,492 694,473 748,438 784,430 802,425 856,387 892,366 910,355 928,347 946,338 982,336 1000,328 1036,321 1054,322 1090,333 1126,345 1180,347 1234,359 1270,373 1288,385 1324,401',
      '28,290 82,313 154,363 208,394 262,428 316,453 370,475 406,477 478,486 496,493 568,494 604,489 640,476 712,463 748,457 802,460 856,468 910,469 964,466 1000,458 1054,457 1144,458 1180,454 1216,450 1252,440 1288,433 1324,425',
      '28,155 82,160 136,175 190,187 244,202 298,215 352,232 388,241 424,248 478,262 514,274 568,286 622,290 640,295 694,300 730,304 784,319 820,325 856,334 910,341 964,349 1036,357 1072,363 1144,380 1180,386 1216,398 1252,406 1288,415 1324,422'],
    grid: [190, 319, 448, 577, 706],
    marks: [['3418.953', 1000, 163, 1], ['2885.089', 244, 853, 1]],
    zero: 1069,
    bars: '1099 1089 1074 1086 1108 1137 1164 1194 1191 1164 1152 1152 1176 1152 1110 1071 1038 1023 1014 990 975 957 957 963 999 1035 1044 1044 1030 1023 999 983 975 971 983 980 996 993 1008 1005 1008 1029 1053 1067 1074 1083 1089 1077 1071 1069 1044 1059 1080 1071 1065 1083 1095 1098 1128 1140 1140 1149 1140 1126 1116 1125 1122 1113 1108 1098 1095 1104 1104',
    diff: '28,1100 64,1092 82,1100 136,1160 154,1195 172,1210 190,1208 208,1213 226,1221 244,1246 262,1246 280,1230 298,1213 316,1190 352,1165 406,1103 442,1075 460,1084 478,1099 514,1099 532,1086 550,1075 586,1036 604,1017 622,1006 658,989 676,985 694,973 712,973 730,968 748,958 766,964 802,982 856,1000 874,994 910,989 928,972 946,980 964,991 1000,982 1018,994 1036,1008 1054,1010 1072,1034 1090,1048 1108,1056 1144,1079 1180,1079 1198,1090 1216,1097 1288,1097 1324,1114',
    dea: '28,1084 64,1085 100,1094 136,1116 172,1148 226,1180 244,1195 280,1211 316,1210 370,1183 406,1156 442,1129 460,1120 514,1112 550,1098 586,1077 622,1055 694,1012 748,990 784,982 856,988 928,986 1000,985 1054,994 1126,1029 1162,1047 1216,1069 1252,1078 1288,1083 1324,1097',
    axis: [[23, '202209'], [243, '11'], [458, '202301'], [710, '03'], [962, '05'], [1214, '07']]
  },
  week: {
    x0: 31, unit: 3, tops: { price: 138, macd: 957 }, origin: 18,
    candles: `c213 216 258 309;c205 254 262 282;c267 268 402 567;c411 438 461 693;c429 453 500 501;r420 428 526 555;c417 438 458 503;c460 471 501 573;c500 525 630 666;r667 668 680 853;c632 670 717 726;r613 628 724 762;r564 566 613 675;c558 562 585 645;r513 517 572 591;r423 424 515 516;r348 391 455 458;r352 359 395 458;r288 319 343 350;c282 324 372 375;c366 366 486 486;r399 438 476 486;c403 438 459 467;c432 462 486 558;r420 432 493 497;c411 441 452 455;c427 459 477 513;c464 508 527 540;r444 447 529 543;c432 438 587 588;c572 588 627 642;c609 645 693 696;r627 643 688 782;c613 650 678 702;c648 678 804 810;r630 643 824 833;r594 625 653 692;c567 612 618 644;r594 610 637 642;r514 556 658 681;r484 505 530 537;c513 514 546 570;c540 546 669 684;r622 624 668 669;r540 552 626 642;r516 517 542 561;r442 445 514 516;c399 399 450 477;r438 449 466 485;c399 453 489 489;r400 442 482 484;r378 379 455 466;c366 375 483 484;r430 459 482 494;r423 444 462 482;r429 436 438 492;r378 382 434 436;r366 370 374 412;c309 370 411 414;r382 386 410 483;r342 374 404 408;c288 366 438 441;r390 427 440 477;c399 429 501 546;r477 481 490 528;c456 478 482 534;r435 438 485 500;c438 438 516 516;r500 507 536 570;c465 501 516 528;r462 472 500 520;c488 492 546 558;r531 541 557 564`,
    ma: [
      '31,247 49,261 67,273 85,320 103,378 121,412 139,442 157,469 175,505 193,542 211,592 229,626 247,640 265,632 283,600 301,548 319,495 337,443 355,400 373,370 391,379 409,392 427,402 445,430 463,460 481,456 499,463 517,468 535,471 553,508 571,540 589,572 607,600 625,638 643,686 661,692 679,676 697,672 715,657 733,620 751,590 769,567 787,575 805,580 841,580 859,563 877,520 895,485 913,472 931,460 949,443 967,446 985,452 1003,443 1021,439 1039,439 1057,418 1075,404 1093,398 1111,385 1129,393 1147,406 1165,424 1183,448 1201,463 1219,464 1237,481 1255,482 1273,490 1291,490 1309,508 1327,518',
      '31,178 49,202 67,228 85,268 103,306 139,354 157,372 175,412 193,462 211,505 229,538 247,558 265,568 319,567 337,550 355,518 373,486 391,462 409,443 427,433 445,422 463,415 499,424 517,438 535,452 553,470 571,486 589,500 607,520 625,552 643,592 661,612 697,640 715,652 733,650 751,636 769,622 805,622 823,612 841,585 859,563 877,545 895,530 913,522 931,516 949,498 967,480 985,464 1003,456 1039,443 1057,432 1075,428 1111,412 1165,413 1183,420 1201,423 1219,432 1237,445 1273,468 1309,488 1327,500',
      '31,155 67,175 85,200 103,213 139,240 157,258 175,278 193,302 211,340 247,388 265,418 283,435 301,449 319,459 355,463 373,470 409,490 445,497 481,492 517,496 553,480 589,480 625,490 643,503 715,553 733,562 769,567 787,574 841,597 895,593 913,587 931,578 949,562 985,544 1003,527 1057,490 1129,461 1147,446 1165,438 1219,437 1237,441 1291,445 1309,454 1327,458',
      '31,173 49,173 103,190 157,198 211,232 265,247 337,259 373,260 409,270 463,286 481,289 553,314 607,335 643,354 661,358 733,394 787,412 823,430 877,444 931,465 985,481 1021,493 1075,501 1129,508 1237,508 1273,503 1309,500 1327,499',
      '31,397 85,387 157,376 247,376 301,369 337,364 409,347 463,335 517,325 571,318 643,316 733,322 769,324 805,332 877,333 895,331 931,334 1003,334 1057,338 1129,340 1165,347 1219,352 1273,364 1327,371'],
    grid: [307, 511, 715],
    marks: [['3500.287', 52, 205, -1], ['2863.650', 196, 853, -1]],
    zero: 1063,
    bars: '1118 1115 1137 1158 1173 1161 1154 1152 1167 1178 1185 1164 1134 1110 1077 1041 1008 981 960 957 981 993 1006 1020 1020 1026 1032 1050 1044 1065 1086 1107 1108 1113 1134 1113 1092 1074 1062 1044 1020 1014 1035 1038 1030 1017 999 987 987 996 996 990 1008 1017 1024 1026 1024 1020 1030 1032 1035 1050 1065 1077 1086 1092 1086 1098 1101 1104 1095 1101 1104',
    diff: '31,1093 49,1095 67,1115 103,1161 157,1186 211,1246 229,1246 265,1235 301,1201 355,1129 373,1111 445,1108 463,1103 499,1102 517,1107 535,1103 553,1115 589,1144 625,1160 643,1177 661,1175 697,1163 733,1142 751,1124 769,1114 787,1120 805,1120 823,1111 859,1078 895,1055 913,1050 949,1028 985,1030 1021,1024 1057,1012 1111,1007 1147,1015 1201,1042 1219,1042 1273,1066 1291,1063 1327,1080',
    dea: '31,1063 49,1070 103,1105 157,1140 211,1182 247,1206 283,1214 301,1212 355,1182 373,1166 409,1145 481,1120 535,1111 571,1114 607,1127 643,1141 661,1151 715,1154 751,1147 769,1138 823,1129 859,1115 895,1091 949,1066 1003,1046 1075,1027 1129,1018 1201,1024 1237,1032 1273,1046 1309,1054 1327,1057',
    axis: [[27, '202203'], [264, '06'], [498, '09'], [715, '12'], [893, '202303'], [1091, '05']]
  },
  dayLong: {
    x0: 70, unit: 2.694, tops: { price: 124, vol: 956, macd: 1177 }, origin: 57,
    candles: `c588 590 609 628;r596 611 632 640;c606 612 724 729;c734 736 787 808;c762 776 796 811;c742 762 821 840;r807 836 850 862;r788 802 833 834;r738 744 777 786;c738 756 759 776;c762 780 786 803;r742 756 763 768;r700 704 759 786;r680 690 704 720;r625 631 675 683;r602 628 631 640;r580 594 607 614;c588 591 605 613;c577 598 621 622;c602 609 620 638;r555 556 604 612;r454 497 551 553;c490 493 502 528;c482 497 504 512;r470 472 507 530;r424 427 460 462;c340 346 420 425;c418 423 446 455;r388 389 432 465;c370 375 390 416;c406 408 430 485;c454 463 476 500;r452 459 464 487;c445 451 489 490;r415 416 484 494;c418 423 433 460;r389 392 443 452;r372 374 380 397;c367 373 399 404;c346 393 458 489;c430 464 507 507;r378 379 491 498;r345 348 378 394;c348 374 379 407;c348 374 384 410;c384 386 426 449;r400 439 443 452;r394 402 427 463;r330 338 402 416;r321 340 347 352;r302 308 332 358;c298 303 320 348;c280 324 391 391;r393 394 414 431;c380 389 407 436;c432 445 493 496;r418 421 494 497;c420 432 465 516;r410 430 435 442;c437 463 501 502;r400 453 465 473;c418 447 485 489;r445 447 472 480;r398 427 430 456;r386 387 436 448;c393 394 429 433;c430 431 454 496;c431 441 465 470;c445 449 472 497;r432 435 470 512;r396 413 430 445;r360 368 402 405;r336 339 368 382;` + shiftCandles,
    ma: [
      '70,584 88,596 106,628 124,664 142,706 160,750 178,792 196,805 214,798 232,794 250,786 268,768 286,754 304,738 322,710 340,675 358,650 376,632 394,616 412,611 430,600 448,580 466,561 484,535 502,508 520,483 538,464 556,450 574,425 592,413 610,413 628,424 646,430 664,450 682,457 700,457 718,440 736,420 754,402 772,410 790,424 808,418 826,415 844,408 862,402 880,384 898,396 916,404 934,400 952,389 970,360 988,340 1006,341 1024,351 1042,362 1060,395 1078,415 1096,436 1114,446 1132,464 1150,455 1168,467 1186,464 1204,463 1222,446 1240,430 1258,426 1276,430 1294,445 1312,452 1330,449 1348,430 1366,406' + shiftMa(0),
      '70,570 88,568 106,590 124,610 160,664 178,695 214,730 250,765 268,779 286,779 304,770 322,753 340,730 358,708 376,695 412,664 448,615 466,590 502,552 556,500 574,475 592,458 610,449 664,443 700,438 736,425 790,440 826,417 862,404 916,410 952,396 988,367 1006,373 1042,375 1060,384 1078,381 1096,384 1132,411 1168,442 1222,450 1258,440 1276,436 1330,436 1366,420' + shiftMa(1),
      '70,642 88,637 160,643 196,648 232,658 250,669 304,690 340,700 412,706 448,698 502,659 538,618 592,562 628,530 682,495 754,453 808,430 862,419 934,416 988,400 1024,394 1060,393 1096,400 1150,401 1204,413 1276,415 1312,428 1348,432 1366,431' + shiftMa(2),
      '70,772 124,772 214,777 250,774 304,766 340,756 394,748 430,740 466,722 520,703 556,678 610,651 664,633 700,620 754,604 808,594 862,574 934,552 988,535 1042,527 1096,523 1150,517 1186,511 1222,496 1294,475 1366,450' + shiftMa(3),
      '70,591 106,598 178,617 250,637 304,648 376,655 466,660 592,661 682,656 800,658 916,655 988,649 1042,646 1150,645 1240,632 1294,626 1366,609' + shiftMa(4)],
    grid: [173, 362, 548, 737], cross: [497, '3226.964'],
    marks: [['3418.953', 1744, 138, 1], ['3031.536', 180, 863, -1]],
    volGrid: 1003, volPast: 1022,
    vol: '1048 1044 1038 1056 1064 1052 1066 1060 1056 1056 1054 1054 1039 1041 1046 1048 1046 1048 1048 1056 1056 1030 1053 1059 1054 1041 1016 1031 1022 1021 1035 1043 1046 1051 1046 1042 1033 1042 1040 1008 1036 1025 1025 1045 1044 1051 1048 1044 1027 1025 1018 1021 1005 1045 1043 1037 1036 1026 1036 1023 1019 1005 1033 1036 1030 1030 1021 1034 1030 1033 1038 1016 1009 1024 1038 1027 1030 1018 1018 1021 1003 1018 1018 1018 1008 1018 1008 1017 1021 1003 979 991 966 951 989 1016 1018 1008 1026 1038 1030 1037 1042 1037 1036 1036 1043 1033 1033 1035 1030 1036 1038 1029 1046 1036 1030 1030 1038 1031 1030 1024 1024 1030 1035 1030 1036 1041 1046 1044 1030 1038 1042 1048 1046 1051 1054 1040 1040 1040 1046 1051 1057 1051 1054 1079',
    zero: 1318,
    bars: '1330 1341 1374 1411 1431 1446 1452 1443 1416 1398 1390 1371 1347 1327 1299 1282 1265 1259 1260 1267 1257 1242 1238 1240 1239 1234 1234 1247 1247 1253 1272 1299 1315 1331 1328 1330 1326 1321 1323 1338 1363 1347 1331 1328 1327 1339 1352 1350 1334 1323 1315 1312 1324 1336 1347 1374 1374 1379 1374 1385 1379 1379 1366 1352 1331 1328 1331 1336 1338 1331 1321 1306 1288 ' + DAY_BARS.split(' ').map(b => Math.round(1318 + (b - 1102) * 0.655)).join(' '),
    diff: '70,1215 88,1222 106,1250 142,1302 178,1347 196,1359 232,1360 250,1365 268,1361 304,1343 358,1300 376,1288 412,1278 430,1265 448,1248 466,1236 484,1227 502,1217 538,1192 556,1190 592,1173 610,1180 646,1196 664,1207 700,1210 754,1208 790,1238 808,1236 826,1227 862,1229 880,1235 898,1248 916,1251 934,1243 952,1240 988,1233 1024,1245 1042,1256 1060,1277 1096,1296 1114,1302 1132,1315 1168,1327 1186,1327 1204,1320 1222,1314 1258,1320 1294,1329 1330,1320 1366,1298 ' + shiftPoints(DAY_DIFF, 1102, 1318, 0.655),
    dea: '70,1210 106,1220 142,1247 178,1280 214,1308 250,1328 286,1337 310,1340 340,1337 376,1320 430,1298 466,1275 538,1238 592,1208 628,1200 700,1203 772,1208 808,1218 880,1226 916,1234 952,1238 1024,1238 1060,1251 1114,1275 1168,1297 1204,1307 1294,1314 1330,1319 1366,1314 ' + shiftPoints(DAY_DEA, 1102, 1318, 0.655),
    axis: [[65, '202212'], [231, '202301'], [555, '02'], [915, '03'], [1329, '04'], [1671, '05'], [2031, '06'], [2391, '07']]
  },
  d10: {
    x0: 28, unit: 2.694, tops: { price: 124, vol: 956, macd: 1177 }, origin: 15,
    candles: `r407 483 516 532;r366 457 487 496;c380 461 554 559;c457 560 566 569;r447 469 553 580;c440 455 562 562;r425 491 559 577;r388 408 478 488;c362 399 460 480;r395 418 464 468;r251 305 418 436;r216 227 317 321;c238 241 306 380;r138 290 300 348;c267 275 401 477;r349 386 395 461;c334 388 420 428;r334 380 418 434;r338 340 389 430;r225 249 341 354;c224 248 259 283;r234 243 260 330;c241 245 294 348;c267 291 360 396;r332 338 360 489;c294 340 352 423;r227 230 346 350;r145 225 230 283;c189 205 283 320;r224 280 288 302;c283 291 339 377;r245 254 344 347;r214 216 255 310;c156 213 232 258;c204 226 258 283;c243 256 288 317;c288 291 345 452;c332 356 392 418;c335 377 504 628;c486 534 542 733;c507 542 612 618;c550 612 810 811;r666 705 809 863;r622 648 694 716;r510 514 637 654;r450 459 538 587;c394 445 455 474;c461 463 524 564;c493 523 563 622;r502 535 567 576;c513 542 595 606;c518 595 654 668;c633 641 772 779;c662 768 771 805;r676 685 777 850;r598 680 685 733;r570 572 682 720;c560 583 662 670;r620 654 667 724;r542 562 653 660;r490 542 558 577;r490 494 541 567;c463 504 514 545;c507 522 538 572;r488 489 530 564;r417 441 498 502;r415 421 444 560;c399 412 503 554;c502 505 557 612;r516 538 559 601;c539 540 565 629;c545 568 585 601;c577 580 608 625`,
    ma: [
      '28,610 46,540 64,517 82,514 100,504 118,520 136,529 154,500 172,480 190,466 208,418 226,368 244,345 262,312 280,306 298,321 316,360 334,378 352,387 370,354 388,330 406,294 424,276 442,282 460,300 478,316 496,315 514,300 532,284 550,274 568,270 586,275 604,274 622,266 640,259 658,249 676,268 694,305 712,354 730,412 748,480 766,580 784,635 802,663 820,655 838,625 856,560 874,518 892,503 910,507 928,535 946,570 964,610 982,660 1000,692 1018,711 1036,697 1054,678 1072,658 1090,628 1108,600 1126,582 1144,555 1162,535 1180,515 1198,496 1216,480 1234,479 1252,481 1270,490 1288,512 1306,545 1324,571',
      '28,746 46,695 64,660 100,592 136,535 154,510 190,485 208,470 226,446 262,396 280,387 298,372 316,363 334,360 352,348 370,330 388,325 406,325 442,331 478,321 496,304 514,292 532,283 550,286 568,295 586,295 604,288 622,278 640,268 658,261 676,269 694,290 712,312 748,365 766,415 784,464 802,511 820,537 838,554 874,576 892,580 928,579 946,563 964,568 982,581 1000,598 1018,624 1036,638 1054,650 1072,658 1090,660 1108,656 1126,640 1144,612 1180,567 1198,547 1234,513 1252,505 1270,502 1288,504 1306,512 1324,524',
      '28,772 46,754 64,742 100,712 136,695 154,672 190,640 208,612 226,568 262,510 280,490 298,468 334,434 370,410 406,388 424,374 442,362 496,332 532,315 550,309 604,308 622,304 658,293 694,287 712,297 730,311 766,357 784,377 802,391 838,406 856,416 874,433 910,460 946,492 982,545 1018,589 1036,600 1054,615 1072,620 1090,621 1108,617 1144,590 1180,585 1234,583 1306,579 1324,571',
      '28,820 64,820 136,812 154,806 208,782 262,750 334,707 370,683 406,654 460,620 496,602 532,594 586,564 640,537 694,512 730,501 784,497 820,490 892,472 946,458 1036,447 1090,446 1126,450 1198,448 1270,449 1324,465',
      '28,712 82,712 136,717 172,717 208,710 226,701 262,692 334,677 388,667 424,659 460,653 496,645 532,637 568,633 604,625 676,616 766,615 892,613 946,617 1018,627 1090,634 1144,634 1216,628 1270,621 1324,613'],
    grid: [249, 416, 583, 750],
    marks: [['3731.687', 262, 138, 1], ['2863.650', 784, 863, 1]],
    volGrid: 998, volPast: 1020,
    vol: '1003 1021 1035 1056 1065 1064 1050 1033 1032 1038 1014 1022 1034 1013 1010 1022 1035 1041 1024 1025 1018 1024 1026 1008 1006 1002 960 952 986 1019 1016 1024 1010 998 1012 1008 1024 1021 1002 1002 1006 1006 1008 1014 1000 992 1008 1018 1032 1033 1026 1032 1048 1044 1029 1030 1017 1026 1053 1046 1033 1033 1030 1026 1025 1016 998 1010 1032 1026 1035 1044 1103',
    zero: 1313, macdGrid: 1200,
    bars: '1223 1215 1230 1247 1247 1266 1272 1266 1275 1277 1266 1253 1262 1269 1294 1312 1326 1334 1334 1320 1315 1314 1320 1336 1342 1350 1335 1328 1331 1334 1344 1339 1331 1328 1331 1336 1350 1363 1385 1404 1419 1452 1452 1436 1400 1363 1336 1328 1328 1320 1324 1334 1352 1363 1352 1342 1317 1315 1312 1294 1280 1264 1257 1260 1259 1253 1247 1257 1276 1289 1299 1309 1322',
    diff: '28,1245 46,1230 82,1224 100,1215 118,1222 136,1219 154,1208 190,1206 208,1195 226,1179 262,1174 280,1182 334,1208 352,1211 388,1203 424,1206 442,1216 478,1232 514,1228 550,1235 568,1246 622,1243 658,1252 676,1262 694,1277 712,1300 748,1340 766,1375 784,1389 802,1399 820,1391 856,1371 910,1365 946,1375 964,1390 982,1402 1018,1400 1036,1388 1072,1385 1108,1363 1144,1337 1180,1324 1198,1310 1216,1300 1252,1304 1288,1308 1324,1321',
    dea: '28,1291 64,1269 100,1250 136,1242 154,1233 208,1222 244,1203 280,1195 334,1198 370,1203 424,1205 460,1212 532,1221 568,1230 658,1240 694,1250 730,1270 766,1302 802,1337 838,1353 892,1361 946,1365 982,1378 1018,1384 1072,1386 1108,1380 1144,1366 1198,1340 1234,1327 1270,1319 1324,1319',
    axis: [[23, '202008'], [188, '202102'], [404, '07'], [584, '202201'], [800, '06'], [1017, '12'], [1196, '202306']]
  }
};

const RED = '#ff3c3c', CYAN = '#00ffff', MA_COLORS = ['#e8e8e8', '#e6e600', '#e600e6', '#00e600', '#7878f0'];
const GRID = '#a00000';
const dotted = (y, color = GRID) => `<line x1="2" x2="100%" y1="${y + 0.5}" y2="${y + 0.5}" stroke="${color}" stroke-dasharray="1 1"/>`;
const poly = (pts, fx, fy, color) => `<polyline fill="none" stroke="${color}" points="${pts.split(' ').map(p => { const [x, y] = p.split(','); return fx(x) + ',' + fy(y); }).join(' ')}"/>`;
const average = (list, n, past) => list.map((_, i) => { let s = 0; for (let k = 0; k < n; k++) s += i - k >= 0 ? list[i - k] : past; return s / n; });

function draw(svg) {
  const c = CHARTS[svg.dataset.chart], part = svg.dataset.part;
  const fx = x => ((x - c.x0) / 3 + 4.5).toFixed(1);
  let out = '';
  if (part === 'axis') {
    for (const [x, t] of c.axis) out += `<text x="${Math.round((x - c.origin) / 3)}" y="11">${t}</text>`;
    svg.innerHTML = out;
    return;
  }
  const Y = v => Math.round((v - c.tops[part]) / c.unit);
  const fy = v => Y(v) + 0.5;
  if (part === 'price') {
    for (const g of c.grid) out += dotted(Y(g));
    c.candles.split(';').forEach((s, i) => {
      const red = s[0] === 'r', [h, t, b, l] = s.slice(1).split(' ').map(Y), x = 2 + i * 6;
      out += `<rect x="${x + 2}" y="${h}" width="1" height="${Math.max(1, l - h)}" fill="${red ? RED : CYAN}"/>`;
      if (!red || b - t < 2) out += `<rect x="${x}" y="${t}" width="5" height="${Math.max(1, b - t)}" fill="${red ? RED : CYAN}"/>`;
      else out += `<rect x="${x + 0.5}" y="${t + 0.5}" width="4" height="${b - t}" fill="#000" stroke="${RED}"/>`;
    });
    c.ma.slice().reverse().forEach((m, i) => { out += poly(m, fx, fy, MA_COLORS[4 - i]); });
    for (const [t, x, y, d] of c.marks) {
      const px = Math.round((x - c.x0) / 3 + 4), py = Y(y), tail = px - d * 11;
      out += `<path d="M${tail} ${py + 0.5}H${px}M${px - d * 3} ${py - 1.5}L${px} ${py + 0.5}L${px - d * 3} ${py + 2.5}" fill="none" stroke="#d0d0d0"/>`;
      out += `<text x="${tail - d * 2}" y="${py + 5}" text-anchor="${d > 0 ? 'end' : 'start'}">${t}</text>`;
    }
    if (c.cross) {
      const y = Y(c.cross[0]);
      out += `<line x1="1" x2="100%" y1="${y + 0.5}" y2="${y + 0.5}" stroke="#c8c8c8"/>`;
      out += `<rect x="1.500" y="${y - 15.5}" width="60" height="15" fill="#000" stroke="#c8c8c8"/><text class="cross" x="5" y="${y - 3}">${c.cross[1]}</text>`;
    }
  }
  if (part === 'vol') {
    const vols = c.vol.split(' ').map(Number), base = Y(1117), cs = c.candles.split(';');
    out += dotted(Y(c.volGrid));
    vols.forEach((v, i) => {
      const t = Y(v), x = 2 + i * 6;
      out += cs[i][0] === 'r' ? `<rect x="${x + 0.5}" y="${t + 0.5}" width="4" height="${base - t - 1}" fill="#000" stroke="${RED}"/>` : `<rect x="${x}" y="${t}" width="5" height="${base - t}" fill="${CYAN}"/>`;
    });
    [[5, '#fff'], [10, '#ff0']].forEach(([n, col]) => {
      out += `<polyline fill="none" stroke="${col}" points="${average(vols, n, c.volPast).map((v, i) => `${4.5 + i * 6},${fy(v)}`).join(' ')}"/>`;
    });
  }
  if (part === 'macd') {
    const z = Y(c.zero);
    if (c.macdGrid) out += dotted(Y(c.macdGrid));
    out += dotted(z, '#e01010');
    c.bars.split(' ').forEach((b, i) => {
      const y = Y(b), up = y < z;
      out += `<rect x="${4 + i * 6}" y="${Math.min(y, z)}" width="1" height="${Math.max(1, Math.abs(y - z))}" fill="${up ? RED : CYAN}"/>`;
    });
    out += poly(c.diff, fx, fy, '#f0f0f0') + poly(c.dea, fx, fy, '#f0f000');
  }
  svg.innerHTML = out;
}

// Intraday chart
const TICK = {
  price: [[123, '3184.365', '+0.52%'], [236, '3180.210', '+0.39%'], [352, '3176.055', '+0.26%'], [465, '3171.900', '+0.13%'], [580, '3167.745', '+0.00%'], [697, '3163.590', '-0.13%'], [810, '3159.435', '-0.26%'], [926, '3155.280', '-0.39%']],
  vol: [[1090, '7764572', '+100%'], [1181, '5823429', '+75%'], [1276, '3882286', '+50%'], [1368, '1941143', '+25%']],
  times: ['09:30', '10:00', '10:30', '11:00', '11:30', '13:30', '14:00', '14:30'],
  avg: '208,615 211,780 215,1000 218,930 221,740 229,714 236,768 242,790 247,735 250,688 256,702 260,660 265,643 269,690 275,652 280,665 284,668 286,653 290,700 295,740 301,808 305,760 310,775 314,790 320,740 325,700 330,650 337,620 341,605 347,590 352,545 356,470 359,420 364,404 369,458 374,462 378,475 384,455 388,435 394,438 402,415 407,432 412,458 418,428 422,370 430,328 436,345 441,300 448,264 452,268 458,276 466,240 471,270 476,285 484,265 492,257 498,283 514,283 523,257 530,282 540,278 545,320 548,355 556,362 560,397 565,380 570,385 576,360 582,380 596,405 604,372 612,362 619,362 623,338 631,350 637,375 641,425 648,418 655,440 663,445 669,468 678,465 685,510 694,512 700,520 705,475 712,445 719,372 724,393 730,395 735,388 740,381 745,387',
  last: '208,865 211,960 215,1035 219,960 221,880 229,856 232,912 242,912 247,840 250,800 256,830 260,790 265,775 268,800 275,755 280,735 287,680 293,712 298,770 302,785 305,735 309,780 314,793 318,750 325,705 330,650 338,615 347,630 352,575 356,500 361,448 366,500 369,518 376,533 386,509 392,522 402,530 405,560 411,578 418,530 421,480 430,437 436,440 444,385 449,345 457,325 462,320 467,280 471,320 476,355 484,330 492,348 498,378 515,378 523,360 530,372 538,365 545,400 550,440 555,440 560,475 567,455 577,430 582,450 596,482 602,460 608,462 614,430 619,420 623,390 633,430 639,460 643,485 650,490 655,512 663,512 672,548 679,572 686,590 692,625 699,628 705,580 712,560 718,460 724,505 728,507 733,492 739,490 745,507',
  sticks: '222,534 224,540 230,572 248,566 254,570 260,558 266,566 305,550 314,572 320,564 329,534 332,558 352,540 358,545 364,560 385,558 402,570 420,548 423,546 430,556 438,556 444,562 450,562 462,564 484,570 492,574 520,566 574,552 610,570 622,570 703,540 710,548 718,556 737,570 212,612 238,588 293,616 302,616 308,590 367,596 376,586 410,612 414,594 457,596 463,590 472,604 478,600 487,592 497,604 503,596 512,592 530,598 535,590 541,596 548,630 553,600 559,632 566,594 583,604 589,596 596,604 625,598 631,594 640,634 648,596 655,592 662,604 668,604 674,600 684,624 690,610 696,616',
  head: '208,1342 211,1094 215,1258 220,1293 223,1302 228,1325 232,1309 238,1326 241,1352 247,1352 250,1366 256,1360 259,1372 264,1380',
  tail: '1385 1398 1388 1385 1396 1385 1392 1390 1396 1398 1394 1392 1396 1410 1408 1400 1402 1387 1402 1390 1355 1398 1402 1410 1412 1416 1418 1412 1420 1416 1418 1414 1412 1410 1412 1406 1404 1408 1416 1414 1410 1406 1408 1412 1414 1418 1418 1426 1422 1430 1432 1424 1430 1432 1430 1428 1424 1434 1436 1430 1424 1412 1426 1430 1436 1440 1434 1432 1436 1424 1436 1440 1438 1434 1430 1400 1430 1432 1428 1430 1424 1416 1426 1424 1428 1432 1434 1430 1434 1432 1436 1434 1438 1434 1436 1438 1434 1436 1434 1434 1366 1434 1440 1442 1441 1444 1436'
};

function drawTick() {
  const Y = v => Math.round((v - 75.4) / 2.694), X = x => Math.round((x - 206) / 3);
  const H = Y(1461);
  let left = '', right = '', grid = '', data = '';
  const tone = i => i < 4 ? '#ff3838' : i === 4 ? '#f0f0f0' : '#00e600';
  const line = (y, col, w = 1) => `<line x1="0" x2="100%" y1="${y + w / 2}" y2="${y + w / 2}" stroke="${col}" stroke-width="${w}"/>`;
  TICK.price.concat(TICK.vol).forEach(([v, a, b], i) => {
    const y = Y(v), col = i < 8 ? tone(i) : '#ff0';
    left += `<text x="60" y="${y + 6}" text-anchor="end" fill="${col}">${a}</text>`;
    right += `<text x="3" y="${y + 6}" fill="${col}">${b}</text>`;
    grid += line(y, '#900000');
  });
  for (let k = 1; k < 8; k++) {
    grid += `<line x1="${k * 12.5}%" x2="${k * 12.5}%" y1="${Y(123)}" y2="${H}" stroke="#900000" ${k % 2 ? 'stroke-dasharray="1 1"' : ''}/>`;
  }
  const m = Y(1040);
  left += `<path d="M1 ${m}H62M1 ${H + 0.5}H62" stroke="#c41208"/><path d="M0 ${m}H62" stroke="#c41208" stroke-width="2"/><path d="M1.500 ${m}V${H}M61.500 0V${H}" stroke="#c41208" fill="none"/>`;
  right += `<path d="M0 ${m}H51" stroke="#c41208" stroke-width="2"/><path d="M0.500 0V${H}M0 ${H + 0.5}H51" stroke="#c41208"/>`;
  grid += line(m - 1, '#c41208', 2) + line(H, '#c41208');
  TICK.times.forEach((t, i) => { grid += `<text x="${i * 12.5}%" y="${H + 12}" text-anchor="middle">${t}</text>`; });
  const z = Y(580), base = Y(1458);
  const bar = (x, v, from, col) => { const y = Y(v); return `<rect x="${X(x)}" y="${Math.min(y, from)}" width="1" height="${Math.abs(y - from)}" fill="${col}"/>`; };
  TICK.sticks.split(' ').forEach(p => { const [x, v] = p.split(',').map(Number); data += bar(x, v, z, v < 580 ? '#ff3838' : '#00e600'); });
  for (let x = 208; x < 700; x += 9) data += bar(x, x % 2 ? 572 : 588, z, x % 2 ? '#ff3838' : '#00e600');
  TICK.head.split(' ').forEach(p => { const [x, v] = p.split(',').map(Number); data += bar(x, v, base, '#ff0'); });
  TICK.tail.split(' ').forEach((v, i) => { data += bar(268 + i * 4.5, v, base, '#ff0'); });
  data += poly(TICK.avg, X, Y, '#ff0') + poly(TICK.last, X, Y, '#fff');
  document.getElementById('tick-left').innerHTML = left;
  document.getElementById('tick-right').innerHTML = right;
  document.getElementById('tick-plot').innerHTML = grid +
    `<svg width="100%" height="${H}" viewBox="0 0 359 ${H}" preserveAspectRatio="none">${data}</svg>` +
    `<text class="cap" x="2" y="14" fill="#f0f0f0">分时走势</text><text class="cap" x="2" y="${Y(1068) + 5}" style="fill:#ff0">成交量</text>`;
}

document.querySelectorAll('[data-nav]').forEach(n => {
  n.innerHTML = [['prev', '上一个'], ['next', '下一个'], ['side', '侧栏'], ['max', '最大化']]
    .map(([id, label]) => `<button aria-label="${label}"><svg width="16" height="14"><use href="#i-${id}"/></svg></button>`).join('');
});
document.querySelectorAll('svg[data-chart]').forEach(draw);
drawTick();
```
